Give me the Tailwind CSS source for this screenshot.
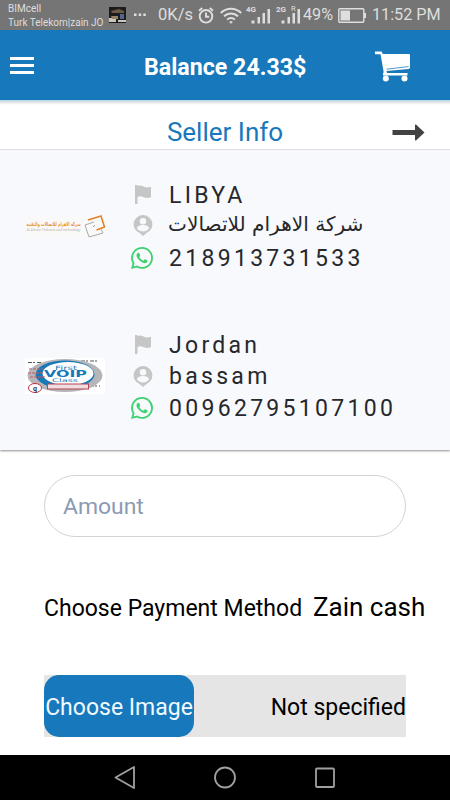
<!DOCTYPE html>
<html lang="en">
<head>
<meta charset="utf-8">
<meta name="viewport" content="width=device-width, initial-scale=1">
<title>Balance</title>
<script src="https://cdn.jsdelivr.net/npm/@tailwindcss/browser@4"></script>
</head>
<body class="bg-white font-['Roboto',sans-serif]">
<svg width="0" height="0" class="absolute">
  <symbol id="flag" viewBox="0 0 16 19"><path fill="#c6c6c6" d="M0 0h2.500v1C4 0 6.500.3 8.500 1.500c2.200 1.300 4.800 1.200 7.500.3v10.200c-2.700 1.300-5 1.300-7.200.2-2.200-1.200-4.100-1.300-6.300-.3V19H0z"/></symbol>
  <symbol id="person" viewBox="0 0 20 21"><path fill="#c6c6c6" d="M10 0a9.400 9.400 0 0 0-3.500 18.100L10 21l3.500-2.900A9.400 9.400 0 0 0 10 0z"/><circle cx="10" cy="6.200" r="3.200" fill="#f8f9fd"/><path fill="#f8f9fd" d="M4 13.400c.3-4.400 11.700-4.400 12 0-2.800 4-9.200 4-12 0z"/></symbol>
  <symbol id="whatsapp" viewBox="0 0 24 24"><path fill="#3fd070" d="M17.472 14.382c-.297-.149-1.758-.867-2.030-.967-.273-.099-.471-.148-.670.150-.197.297-.767.966-.940 1.164-.173.199-.347.223-.644.075-.297-.150-1.255-.463-2.390-1.475-.883-.788-1.480-1.761-1.653-2.059-.173-.297-.018-.458.130-.606.134-.133.298-.347.446-.520.149-.174.198-.298.298-.497.099-.198.050-.371-.025-.520-.075-.149-.669-1.612-.916-2.207-.242-.579-.487-.500-.669-.510-.173-.008-.371-.010-.570-.010-.198 0-.520.074-.792.372-.272.297-1.040 1.016-1.040 2.479 0 1.462 1.065 2.875 1.213 3.074.149.198 2.096 3.200 5.077 4.487.709.306 1.262.489 1.694.625.712.227 1.360.195 1.871.118.571-.085 1.758-.719 2.006-1.413.248-.694.248-1.289.173-1.413-.074-.124-.272-.198-.570-.347m-5.421 7.403h-.004a9.870 9.870 0 0 1-5.031-1.378l-.361-.214-3.741.982.998-3.648-.235-.374a9.860 9.860 0 0 1-1.510-5.260c.001-5.450 4.436-9.884 9.888-9.884 2.640 0 5.122 1.030 6.988 2.898a9.825 9.825 0 0 1 2.893 6.994c-.003 5.450-4.437 9.884-9.885 9.884m8.413-18.297A11.815 11.815 0 0 0 12.050 0C5.495 0 .160 5.335.157 11.892c0 2.096.547 4.142 1.588 5.945L.057 24l6.305-1.654a11.882 11.882 0 0 0 5.683 1.448h.005c6.554 0 11.890-5.335 11.893-11.893a11.821 11.821 0 0 0-3.480-8.413z"/></symbol>
</svg>
<div class="flex h-[800px] w-[450px] flex-col overflow-hidden">
  <div class="flex h-[30px] shrink-0 items-center bg-[#757575] pl-2 whitespace-nowrap text-[#dedede]">
    <div class="mt-px flex w-[101px] flex-col text-[10px] leading-[14px]"><span>BIMcell</span><span>Turk Telekom|zain JO</span></div>
    <svg class="h-4 w-[17px] shrink-0" viewBox="0 0 17 16"><rect width="17" height="16" fill="#1d1c1c"/><path d="M2 4l8-2 5 2v2H3z" fill="#6c5947"/><path d="M0 11h7v4H0zM9 13h8v2H9z" fill="#c9c5bd"/><path d="M2 9h7v3H3z" fill="#988267"/><path d="M11 7h4v5h-4z" fill="#53658d"/></svg>
    <svg class="ml-2 h-1 w-3 shrink-0" viewBox="0 0 12 4" fill="#dedede"><rect y=".5" width="2.500" height="2.500"/><rect x="4.700" y=".5" width="2.500" height="2.500"/><rect x="9.300" y=".5" width="2.500" height="2.500"/></svg>
    <span class="mt-px ml-3 w-[40px] text-[16.500px]">0K/s</span>
    <svg class="h-[17px] w-4 shrink-0" viewBox="0 0 16 17" fill="none" stroke="#dedede" stroke-width="1.900"><circle cx="8" cy="9.300" r="6.300"/><path d="M1 3.800L4.300 1M15 3.800L11.700 1M8 5.500v4.200h3.200"/></svg>
    <svg class="ml-[6px] h-[17px] w-[22px] shrink-0" viewBox="0 0 22 17" fill="none" stroke="#dedede" stroke-width="2"><path d="M.8 6c5.800-5.800 14.600-5.800 20.400 0M4 9.400c4-4 10-4 14 0M7.200 12.600c2.200-2.200 5.400-2.200 7.600 0M9.700 15.300h2.600"/></svg>
    <svg class="ml-1 h-[20px] w-[25px] shrink-0" viewBox="0 0 25 20" fill="#dedede"><text x="0" y="6.500" font-size="8" font-weight="700">4G</text><path d="M5.500 15.500h3v3h-3zM11.500 12h2.500v6.500h-2.500zM16.500 8H19v10.500h-2.500zM21.500 4H24v14.500h-2.500z"/></svg>
    <svg class="ml-[5px] h-[20px] w-[25px] shrink-0" viewBox="0 0 25 20" fill="#dedede"><text x="0" y="6.500" font-size="8" font-weight="700">2G</text><text x="15" y="5.500" font-size="7.500">R</text><path d="M5.500 15.500h3v3h-3zM11.500 12h2.500v6.500h-2.500zM16.500 8H19v10.500h-2.500zM21.500 4H24v14.500h-2.500z"/></svg>
    <span class="mt-px ml-[2px] w-[35px] text-[16.200px]">49%</span>
    <svg class="h-[15px] w-[29px] shrink-0" viewBox="0 0 29 15"><rect x=".8" y=".8" width="25" height="13.400" rx="1" fill="none" stroke="#dedede" stroke-width="1.400"/><path d="M2.500 2.500H12v10H2.500zM26 5h2v5h-2z" fill="#dedede"/></svg>
    <span class="mt-px ml-[5px] text-[16.200px]">11:52 PM</span>
  </div>
  <header class="flex h-[70px] shrink-0 items-center bg-[#1778bb] pl-[10px] text-white">
    <div class="mt-px flex w-6 flex-col gap-1"><i class="h-[3px] bg-white"></i><i class="h-[3px] bg-white"></i><i class="h-[3px] bg-white"></i></div>
    <h1 class="mt-[5px] ml-[110px] w-[231px] text-[23.200px] font-bold whitespace-nowrap">Balance 24.33$</h1>
    <svg class="mt-[2px] h-[31px] w-[36px]" viewBox="0 0 36 31"><path fill="#fff" d="M0 .5h6.500l1.400 2.500H34q1 0 1 1.200v12.300q0 1.200-1.500 1.400L11.500 20l.5 2H32v1H8.500V20L5.500 3.200H0z"/><path d="M11.500 18.200l22-2.600" stroke="#1778bb" stroke-width="1" opacity=".75"/><path d="M8 22h24.500v2.500H8z" fill="#fff"/><circle cx="10.800" cy="27.500" r="3" fill="#fff"/><circle cx="29.500" cy="27.500" r="3" fill="#fff"/></svg>
  </header>
  <div class="relative z-10 grid h-[50px] shrink-0 grid-cols-[1fr_auto_1fr] items-center border-t border-b border-t-[#b0dcec] border-b-[#dedfe2] bg-linear-to-b from-[#d5d9dc] to-white to-8% bg-white">
    <span></span>
    <h2 class="pt-[13px] text-[26px] leading-[30px] whitespace-nowrap text-[#1778bb]">Seller Info</h2>
    <div class="relative flex justify-end pt-[15px] pr-[25px]"><i class="absolute top-[34px] right-[32px] h-[4px] w-[19px] rounded-b bg-white"></i><svg class="relative h-[17px] w-[33px]" viewBox="0 0 33 17"><path d="M.5 6H23V1q0-.8 1-.5l8.500 8-8.500 8q-1 .3-1-.5v-5H.5z" fill="#424242"/></svg></div>
  </div>
  <section class="relative flex h-[300px] shrink-0 flex-col bg-[#f8f9fd] text-[23px] leading-8 tracking-[3.300px] text-[#26282b] shadow-[0_1px_2px_#00000070]">
    <article class="flex h-[150px] pt-7">
      <div class="ml-[25px] flex w-[106px] items-center pb-6"><svg class="h-6 w-20 overflow-visible" viewBox="0 0 80 24"><rect width="80" height="23" fill="#faf9fa"/><text x="1.500" y="11" textLength="54" lengthAdjust="spacingAndGlyphs" font-family="DejaVu Sans" font-size="5.500" font-weight="700" fill="#e69232" letter-spacing="0">شركة الاهرام للاتصالات والتقنية</text><text x="1.500" y="15.500" textLength="54" lengthAdjust="spacingAndGlyphs" font-size="3.200" fill="#b9b3ad" letter-spacing="0">Al Ahram Telecom and technology</text><g fill="none"><path d="M69 7l-9 3 4 12 14-4-2-4" stroke="#aaa" stroke-width="1"/><path d="M63 5l13-4 3.500 11-8 3" stroke="#e1832b" stroke-width="1.600"/><path d="M68 12l2-2" stroke="#999"/></g></svg></div>
      <div class="flex flex-col">
        <p class="flex h-8 items-center"><span class="flex w-[38px] pl-1"><svg class="h-[19px] w-4"><use href="#flag"/></svg></span><span class="pt-[3px]">LIBYA</span></p>
        <p class="flex h-[31px] items-center"><span class="flex w-[37px] pl-[2px]"><svg class="h-[21px] w-5"><use href="#person"/></svg></span><span dir="rtl" class="pb-1 font-['DejaVu_Sans',sans-serif] text-[20.100px] leading-8 tracking-normal whitespace-nowrap">شركة الاهرام للاتصالات</span></p>
        <p class="flex h-[34px] items-center"><span class="flex w-[38px]"><svg class="h-[22px] w-[22px]"><use href="#whatsapp"/></svg></span><span class="pt-[2px]">218913731533</span></p>
      </div>
    </article>
    <article class="flex h-[150px] pt-7">
      <div class="ml-[25px] flex w-[106px] items-center pb-[27px]"><svg class="h-9 w-20" viewBox="0 0 80 36" letter-spacing="0"><rect width="80" height="36" fill="#fff"/><g stroke="#555" stroke-width="1.200" stroke-dasharray="4 1 2 2"><path d="M3 4.500h13M56 3h18M65 28h10"/></g><ellipse cx="40" cy="17.500" rx="37.500" ry="16.500" fill="#b6b5b9"/><ellipse cx="40" cy="16.500" rx="29.500" ry="14" fill="#1778b8"/><ellipse cx="43" cy="15.500" rx="25.500" ry="11.500" fill="#fff"/><path d="M48 23l6 5 3-6z" fill="#fff"/><path d="M4 11h15M3 15h16M5 19h15" stroke="#c25c68" stroke-dasharray="3 1"/><g font-family="DejaVu Sans" fill="#1778b8"><text x="30" y="12" textLength="22" lengthAdjust="spacingAndGlyphs" font-size="6">First</text><text x="19" y="19" textLength="43" lengthAdjust="spacingAndGlyphs" font-weight="700" font-size="8">VOIP</text><text x="27" y="24" textLength="26" lengthAdjust="spacingAndGlyphs" font-size="5">Class</text></g><rect x="22.500" y="26" width="41" height="5" fill="#efdde0" stroke="#b44453"/><ellipse cx="10" cy="30" rx="6.500" ry="4.500" fill="#fff" stroke="#c32e3d"/><text x="8" y="32.500" font-size="7" font-weight="700" fill="#333">q</text></svg></div>
      <div class="flex flex-col">
        <p class="flex h-8 items-center"><span class="flex w-[38px] pl-1"><svg class="h-[19px] w-4"><use href="#flag"/></svg></span><span class="pt-[3px]">Jordan</span></p>
        <p class="flex h-8 items-center"><span class="flex w-[38px] pl-[2px]"><svg class="h-[21px] w-5"><use href="#person"/></svg></span><span class="pt-[2px]">bassam</span></p>
        <p class="flex h-8 items-center"><span class="flex w-[38px]"><svg class="h-[22px] w-[22px]"><use href="#whatsapp"/></svg></span><span class="pt-[2px]">00962795107100</span></p>
      </div>
    </article>
  </section>
  <main class="flex h-[305px] shrink-0 flex-col pl-[44px]">
    <div class="mt-[25px] flex h-[62px] w-[362px] shrink-0 items-center rounded-full border border-[#d2d3d5] pt-[3px] pl-[18px] text-[22.900px] text-[#8b9bb3]">Amount</div>
    <div class="mt-[51px] flex h-10 items-baseline whitespace-nowrap text-black"><span class="w-[269px] text-[23px]">Choose Payment Method</span><span class="text-[26px]">Zain cash</span></div>
    <div class="mt-[47px] flex h-[62px] w-[362px] items-center justify-between bg-[#e5e5e5] text-[23px] whitespace-nowrap text-black"><button class="h-[62px] w-[150px] rounded-[15px] bg-[#1778bb] pt-[5px] text-[#effaff]">Choose Image</button><span class="pt-[5px]">Not specified</span></div>
  </main>
  <nav class="flex h-[45px] shrink-0 items-center justify-center bg-black">
    <svg class="h-6 w-[222px]" viewBox="0 0 222 24" fill="none" stroke="#a0a0a0" stroke-width="1.800" stroke-linejoin="round"><path d="M20 1v21L1.500 11.500z"/><circle cx="111" cy="11.500" r="10"/><rect x="202" y="2.500" width="18" height="18.500" rx="1"/></svg>
  </nav>
</div>
</body>
</html>
